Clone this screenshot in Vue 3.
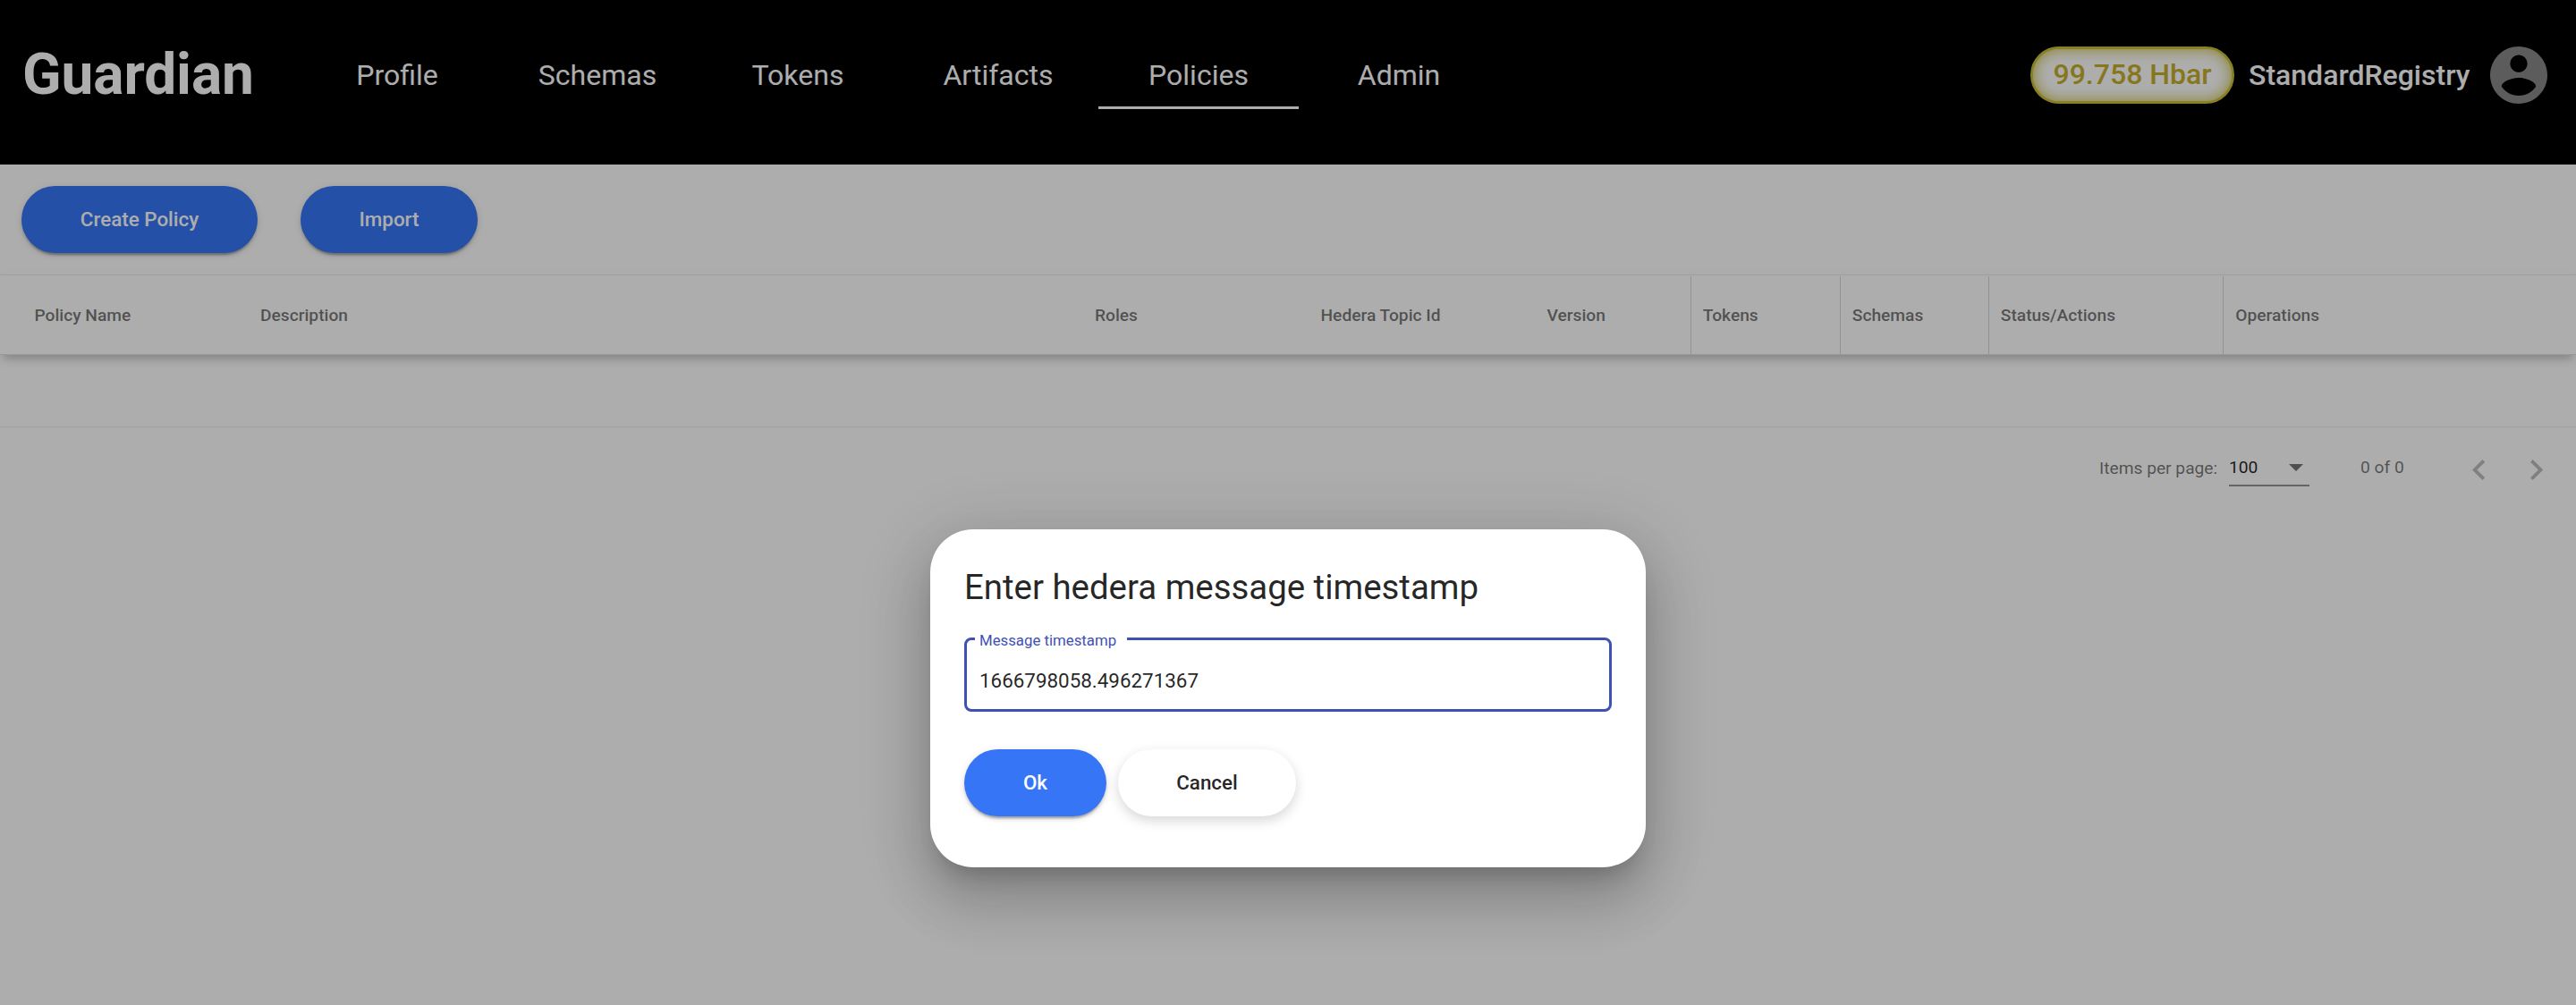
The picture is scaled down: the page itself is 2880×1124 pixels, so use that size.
<script setup>
const tabs = ['Profile', 'Schemas', 'Tokens', 'Artifacts', 'Policies', 'Admin']
const activeTab = 'Policies'
const columns = [
  { label: 'Policy Name', key: 'name' },
  { label: 'Description', key: 'description' },
  { label: 'Roles', key: 'roles' },
  { label: 'Hedera Topic Id', key: 'topic' },
  { label: 'Version', key: 'version' },
  { label: 'Tokens', key: 'tokens', divided: true },
  { label: 'Schemas', key: 'schemas', divided: true },
  { label: 'Status/Actions', key: 'status', divided: true },
  { label: 'Operations', key: 'operations', divided: true },
]
</script>

<template>
  <div class="page">
    <header class="header">
      <div class="brand">Guardian</div>
      <nav class="tabs">
        <a v-for="tab in tabs" :key="tab" class="tab" :class="{ active: tab === activeTab }">{{ tab }}</a>
      </nav>
      <div class="account">
        <div class="balance">99.758 Hbar</div>
        <div class="user">StandardRegistry</div>
        <svg class="avatar" viewBox="2 2 20 20">
          <path fill="#888" d="M12 2C6.48 2 2 6.48 2 12s4.48 10 10 10 10-4.48 10-10S17.52 2 12 2zm0 3c1.66 0 3 1.34 3 3s-1.34 3-3 3-3-1.34-3-3 1.34-3 3-3zm0 14.2c-2.5 0-4.71-1.28-6-3.22.03-1.99 4-3.08 6-3.08 1.99 0 5.97 1.09 6 3.08-1.29 1.94-3.5 3.22-6 3.22z" />
        </svg>
      </div>
    </header>

    <div class="toolbar">
      <button class="btn primary create">Create Policy</button>
      <button class="btn primary import">Import</button>
    </div>

    <div class="table-head">
      <div v-for="col in columns" :key="col.key" class="cell" :class="[col.key, { divided: col.divided }]">{{ col.label }}</div>
    </div>
    <div class="table-body"></div>

    <div class="paginator">
      <span class="per-page">Items per page:</span>
      <div class="select">
        <span>100</span>
        <svg class="caret" viewBox="0 0 16 8"><path d="M0 0h16L8 8z" fill="#757575" /></svg>
      </div>
      <span class="range">0 of 0</span>
      <svg class="arrow prev" viewBox="8 6 7.41 12"><path d="M15.41 7.41L14 6l-6 6 6 6 1.41-1.41L10.83 12z" /></svg>
      <svg class="arrow next" viewBox="8.59 6 7.41 12"><path d="M10 6L8.59 7.41 13.17 12l-4.58 4.59L10 18l6-6z" /></svg>
    </div>

    <div class="overlay">
      <section class="dialog">
        <h1 class="title">Enter hedera message timestamp</h1>
        <fieldset class="field">
          <legend class="legend"><span class="label">Message timestamp</span></legend>
          <div class="value">1666798058.496271367</div>
        </fieldset>
        <div class="actions">
          <button class="btn primary ok">Ok</button>
          <button class="btn cancel">Cancel</button>
        </div>
      </section>
    </div>
  </div>
</template>

<style>
body {
  margin: 0;
}
</style>

<style scoped>
.page {
  position: relative;
  width: 2880px;
  height: 1124px;
  overflow: hidden;
  background: #fff;
  font-family: Roboto, "Liberation Sans", sans-serif;
  color: rgba(0, 0, 0, 0.87);
}
.header {
  display: flex;
  height: 184px;
  background: #000;
  color: #fff;
}
.brand {
  box-sizing: border-box;
  width: 332px;
  padding-left: 25px;
  line-height: 168px;
  font-size: 64px;
  font-weight: 700;
  letter-spacing: -0.1px;
  white-space: nowrap;
}
.tabs {
  display: flex;
  height: 122px;
}
.tab {
  box-sizing: border-box;
  width: 224px;
  height: 122px;
  padding-top: 46px;
  border-bottom: 3px solid transparent;
  line-height: 76px;
  font-size: 32px;
  text-align: center;
}
.tab.active {
  border-color: #fff;
}
.account {
  display: flex;
  align-items: center;
  height: 64px;
  margin: 52px 32px 0 auto;
  font-size: 32px;
  font-weight: 500;
}
.balance {
  box-sizing: border-box;
  width: 228px;
  height: 64px;
  border: 3px solid #c8bd38;
  border-radius: 32px;
  background: #fff;
  box-shadow: inset 0 0 16px #c8bd38;
  color: #c6b02c;
  line-height: 57px;
  text-align: center;
}
.user {
  margin-left: 16px;
  width: 270px;
  line-height: 62px;
}
.avatar {
  width: 64px;
  height: 64px;
}
.toolbar {
  display: flex;
  gap: 48px;
  box-sizing: border-box;
  height: 123px;
  padding: 24px;
}
.btn {
  height: 75px;
  padding: 0;
  border: 0;
  border-radius: 38px;
  font: 500 22.4px/75px Roboto, "Liberation Sans", sans-serif;
  text-align: center;
  box-shadow: 0 5px 2px -3px rgba(0, 0, 0, 0.2), 0 3px 3px rgba(0, 0, 0, 0.14), 0 2px 8px rgba(0, 0, 0, 0.12);
}
.primary {
  background: #3676f6;
  color: #fff;
}
.create {
  width: 264px;
}
.import {
  width: 198px;
}
.table-head {
  position: relative;
  display: flex;
  box-sizing: border-box;
  height: 90px;
  border-top: 1px solid #ebebeb;
  border-bottom: 1px solid #e0e0e0;
  padding-left: 38.4px;
  background: #fff;
  box-shadow: 0 9px 9px -5px rgba(0, 0, 0, 0.16), 0 5px 12px -1px rgba(0, 0, 0, 0.1);
  font-size: 19.2px;
  font-weight: 500;
  line-height: 89px;
  color: rgba(0, 0, 0, 0.54);
}
.cell {
  box-sizing: border-box;
  flex: none;
  white-space: nowrap;
}
.cell.divided {
  margin-top: 1px;
  line-height: 87px;
  padding-left: 12.8px;
  border-left: 1px solid #d8d8d8;
}
.name { width: 252.6px; }
.description { width: 933px; }
.roles { width: 252.5px; }
.topic { width: 253px; }
.version { width: 160.5px; }
.tokens { width: 167px; }
.schemas { width: 166px; }
.status { width: 262.5px; }
.operations { width: 393px; }
.table-body {
  height: 80px;
  border-bottom: 1px solid #ebebeb;
}
.paginator {
  display: flex;
  align-items: flex-start;
  padding-top: 34px;
  font-size: 19.2px;
  line-height: 24px;
  color: rgba(0, 0, 0, 0.54);
}
.per-page {
  width: 145px;
  margin-left: 2347px;
}
.select {
  display: flex;
  justify-content: space-between;
  align-items: center;
  box-sizing: border-box;
  width: 90px;
  height: 32px;
  padding: 0 7px 8px 0;
  border-bottom: 2px solid #949494;
  color: rgba(0, 0, 0, 0.87);
}
.caret {
  width: 16px;
  height: 8px;
}
.range {
  width: 125px;
  margin: -1px 0 0 57px;
}
.arrow {
  width: 14.2px;
  height: 23px;
  margin-top: 2px;
  fill: rgba(0, 0, 0, 0.26);
}
.next {
  margin-left: 51px;
}
.overlay {
  position: absolute;
  inset: 0;
  display: flex;
  justify-content: center;
  align-items: center;
  background: rgba(0, 0, 0, 0.32);
}
.dialog {
  box-sizing: border-box;
  width: 800px;
  height: 378px;
  margin-top: 438px;
  margin-bottom: 0;
  padding: 38px;
  border-radius: 48px;
  background: #fff;
  box-shadow: 0 18px 24px -11px rgba(0, 0, 0, 0.2), 0 38px 61px 5px rgba(0, 0, 0, 0.14), 0 14px 74px 13px rgba(0, 0, 0, 0.12);
}
.title {
  margin: 0;
  height: 72px;
  font-size: 38.4px;
  font-weight: 400;
  line-height: 54px;
}
.field {
  box-sizing: border-box;
  width: 724px;
  height: 94px;
  margin: 0;
  padding: 0 14px;
  border: 3px solid #3f51b5;
  border-radius: 8px;
}
.legend {
  height: 24px;
  margin-left: -5px;
  padding: 0 12px 0 5px;
  color: #3f51b5;
  font-size: 16.8px;
  line-height: 28px;
}
.value {
  padding-top: 12px;
  line-height: 46px;
  font-size: 22.4px;
}
.actions {
  display: flex;
  gap: 13px;
  margin-top: 42px;
}
.ok {
  width: 159px;
}
.cancel {
  width: 199px;
  background: #fff;
  color: rgba(0, 0, 0, 0.87);
  box-shadow: 0 5px 14px rgba(0, 0, 0, 0.16);
}
</style>
